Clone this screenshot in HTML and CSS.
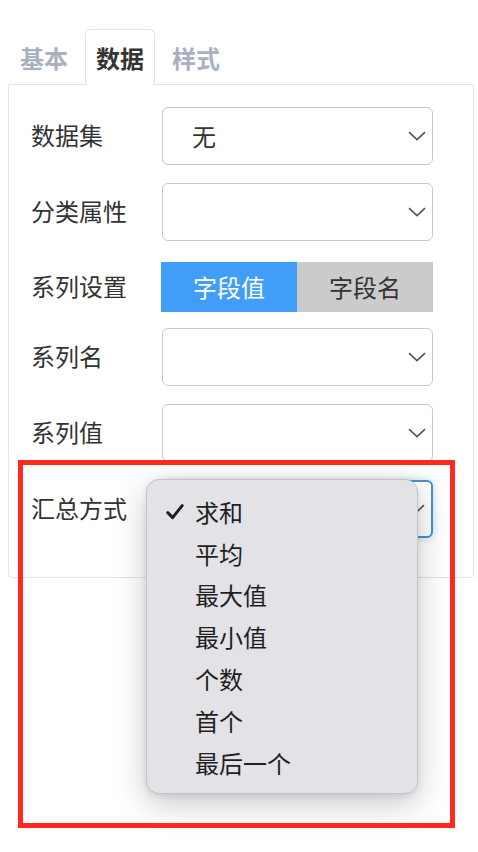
FILE: index.html
```html
<!DOCTYPE html>
<html lang="zh">
<head>
<meta charset="utf-8">
<link rel="stylesheet" href="styles.css">
</head>
<body>
<div class="page">
  <div class="tabs">
    <div class="tab">基本</div>
    <div class="tab active">数据</div>
    <div class="tab">样式</div>
  </div>
  <div class="panel">
    <div class="row">
      <div class="label">数据集</div>
      <div class="select"><span class="value">无</span><svg class="chev" viewBox="0 0 18 10"><path d="M1 1.2 L9 8.6 L17 1.2" /></svg></div>
    </div>
    <div class="row">
      <div class="label">分类属性</div>
      <div class="select"><span class="value"></span><svg class="chev" viewBox="0 0 18 10"><path d="M1 1.2 L9 8.6 L17 1.2" /></svg></div>
    </div>
    <div class="row row-toggle">
      <div class="label">系列设置</div>
      <div class="toggle">
        <div class="seg on">字段值</div>
        <div class="seg off">字段名</div>
      </div>
    </div>
    <div class="row">
      <div class="label">系列名</div>
      <div class="select"><span class="value"></span><svg class="chev" viewBox="0 0 18 10"><path d="M1 1.2 L9 8.6 L17 1.2" /></svg></div>
    </div>
    <div class="row">
      <div class="label">系列值</div>
      <div class="select"><span class="value"></span><svg class="chev" viewBox="0 0 18 10"><path d="M1 1.2 L9 8.6 L17 1.2" /></svg></div>
    </div>
    <div class="row">
      <div class="label">汇总方式</div>
      <div class="select focused"><span class="value"></span><svg class="chev" viewBox="0 0 18 10"><path d="M1 1.2 L9 8.6 L17 1.2" /></svg></div>
    </div>
  </div>

  <div class="menu">
    <div class="item checked"><svg class="check" viewBox="0 0 18 16"><path d="M1.8 8.6 L6.6 13.6 L16.2 1.6" /></svg><span>求和</span></div>
    <div class="item"><span>平均</span></div>
    <div class="item"><span>最大值</span></div>
    <div class="item"><span>最小值</span></div>
    <div class="item"><span>个数</span></div>
    <div class="item"><span>首个</span></div>
    <div class="item"><span>最后一个</span></div>
  </div>

  <div class="highlight"></div>
</div>
</body>
</html>
```
FILE: styles.css
```css
* { box-sizing: border-box; }

html, body {
  margin: 0;
  padding: 0;
  background: #ffffff;
}

body {
  font-family: "Noto Sans CJK SC", "Noto Sans", sans-serif;
  color: #333333;
}

.page {
  position: relative;
  width: 478px;
  height: 852px;
  overflow: hidden;
}

.tabs {
  display: flex;
  gap: 6px;
  padding: 29px 0 0 9px;
  position: relative;
  z-index: 2;
}

.tab {
  height: 56px;
  width: 70px;
  padding: 0;
  border: 1px solid transparent;
  border-bottom: none;
  border-radius: 6px 6px 0 0;
  font-size: 24px;
  font-weight: 700;
  color: #a9b0bf;
  display: flex;
  align-items: center;
  justify-content: center;
  margin-bottom: -1px;
  background: transparent;
  line-height: 1;
}

.tab.active {
  border-color: #dfe3e8;
  color: #333333;
  background: #ffffff;
}

.panel {
  margin: 0 4px 0 8px;
  border: 1px solid #e1e4e9;
  border-radius: 0 0 4px 4px;
  padding: 22px 40px 38px 22px;
  display: flex;
  flex-direction: column;
  gap: 18px;
  height: 494px;
}

.row {
  display: flex;
  align-items: center;
  height: 58px;
}

.row-toggle {
  height: 50px;
  margin: 3px 0 -2px;
}

.label {
  width: 131px;
  flex: none;
  font-size: 24px;
  color: #333333;
  line-height: 1;
  padding-left: 0;
  margin-top: -2px;
}

.select {
  width: 271px;
  height: 58px;
  border: 1px solid #c9c9c9;
  border-radius: 6px;
  background: #ffffff;
  display: flex;
  align-items: center;
  justify-content: space-between;
  padding: 0 6px 0 29px;
  font-size: 24px;
  color: #333333;
  line-height: 1;
}

.select.focused {
  border: 2px solid #4a92c8;
  box-shadow: 0 0 8px rgba(74, 146, 200, 0.35);
}

.chev {
  width: 18px;
  height: 10px;
}

.chev path {
  fill: none;
  stroke: #555555;
  stroke-width: 1.6;
}

.toggle {
  display: flex;
  height: 50px;
  width: 273px;
  margin-left: -1px;
}

.seg {
  flex: 1;
  display: flex;
  align-items: center;
  justify-content: center;
  font-size: 24px;
  line-height: 1;
}

.seg.on {
  background: #419ef8;
  color: #ffffff;
}

.seg.off {
  background: #cbcbcb;
  color: #333333;
}

.menu {
  position: absolute;
  left: 146px;
  top: 479px;
  width: 272px;
  height: 315px;
  background: #e3e2e7;
  border: 1px solid #c4c3c8;
  border-radius: 13px;
  box-shadow: 0 10px 32px rgba(0, 0, 0, 0.22), 0 2px 6px rgba(0, 0, 0, 0.08);
  padding: 11px 0 10px 0;
  z-index: 5;
}

.item {
  position: relative;
  height: 41.8px;
  display: flex;
  align-items: center;
  padding-left: 48px;
  font-size: 24px;
  line-height: 1;
  color: #1f1f1f;
}

.check {
  position: absolute;
  left: 19px;
  top: 50%;
  width: 18px;
  height: 16px;
  transform: translateY(-50%);
}

.check path {
  fill: none;
  stroke: #1f1f1f;
  stroke-width: 3;
  stroke-linecap: round;
  stroke-linejoin: round;
}

.highlight {
  position: absolute;
  left: 18px;
  top: 460px;
  width: 437px;
  height: 368px;
  border: 5px solid #ff2a1d;
  z-index: 6;
}
```
